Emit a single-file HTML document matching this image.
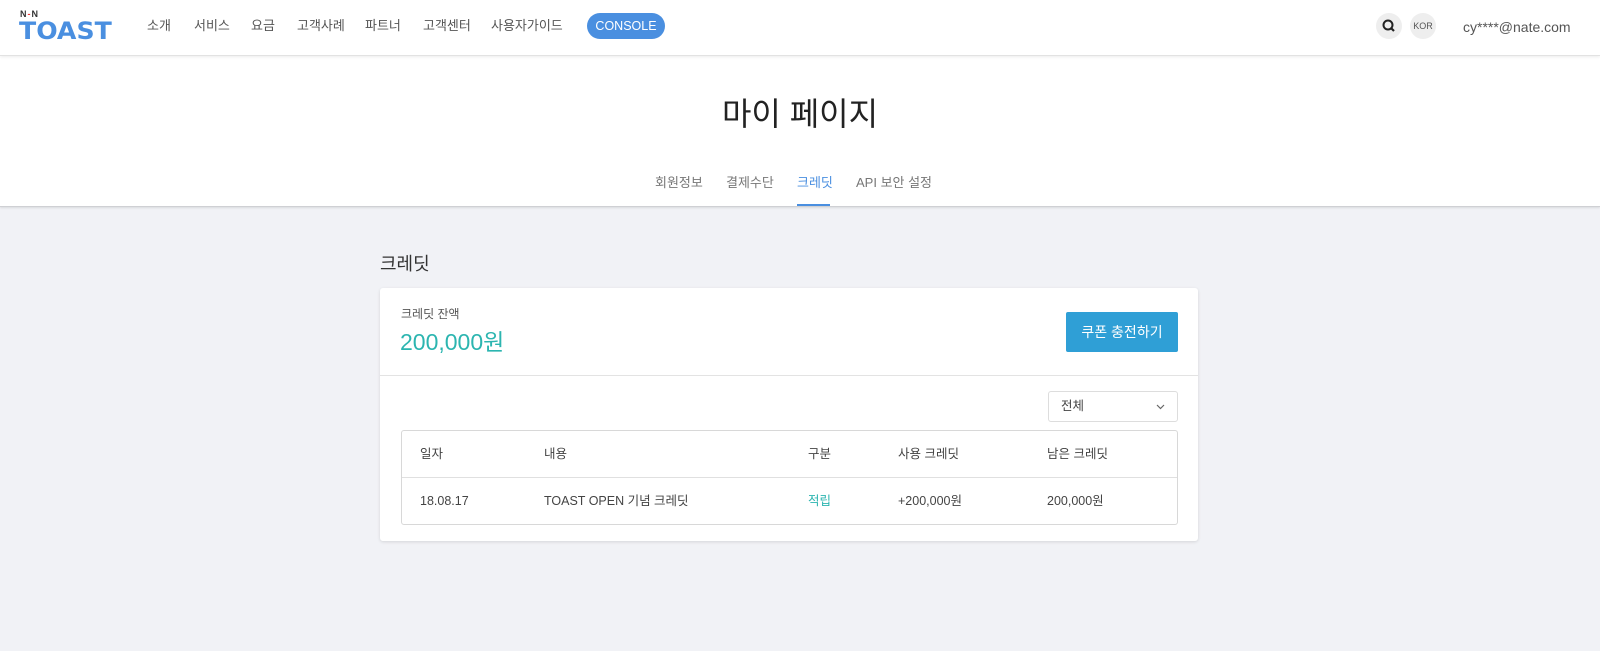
<!DOCTYPE html><html><head><meta charset="utf-8"><style>
*{margin:0;padding:0;box-sizing:border-box}
body{width:1600px;height:651px;background:#f1f2f6;font-family:"Liberation Sans","Noto Sans CJK KR",sans-serif;color:#333;position:relative;overflow:hidden}
.hd{position:absolute;left:0;top:0;width:1600px;height:56px;background:#fff;border-bottom:1px solid #e2e2e2;box-shadow:0 1px 3px rgba(0,0,0,.08);z-index:2}
.nav{position:absolute;top:17px;font-size:13px;color:#555;line-height:18px}
.band{position:absolute;left:0;top:56px;width:1600px;height:151px;background:#fff;border-bottom:1px solid #cfd0d4;box-shadow:0 1px 2px rgba(0,0,0,.1)}
.t{position:absolute;font-size:13px;color:#777;top:174px;line-height:18px}
.card{position:absolute;left:380px;top:288px;width:818px;height:253px;background:#fff;border-radius:3px;box-shadow:0 1px 3px rgba(0,0,0,.12)}
.a{position:absolute;font-size:12.5px;color:#444;line-height:18px}
</style></head><body>
<div class="hd">
 <div style="position:absolute;left:20px;top:9px;font-size:9px;font-weight:bold;letter-spacing:1px;color:#333;line-height:10px">N<span style="color:#e33">-</span>N</div>
 <div style="position:absolute;left:19px;top:20px;font-size:24px;line-height:22px;font-weight:900;color:#4a8fe0;letter-spacing:0px;font-family:'DejaVu Sans',sans-serif;transform:scaleX(1.05);transform-origin:left">TOAST</div>
 <span class="nav" style="left:147px">소개</span><span class="nav" style="left:194px">서비스</span><span class="nav" style="left:251px">요금</span><span class="nav" style="left:297px">고객사례</span><span class="nav" style="left:365px">파트너</span><span class="nav" style="left:423px">고객센터</span><span class="nav" style="left:491px">사용자가이드</span>
 <div style="position:absolute;left:587px;top:13px;width:78px;height:26px;border-radius:13px;background:#4a8fe0;color:#fff;font-size:12.5px;text-align:center;line-height:26px">CONSOLE</div>
 <div style="position:absolute;left:1376px;top:13px;width:26px;height:26px;border-radius:13px;background:#eee"><svg width="26" height="26"><circle cx="12" cy="12" r="4.5" fill="none" stroke="#222" stroke-width="2"/><line x1="15" y1="15" x2="18" y2="18" stroke="#222" stroke-width="2.2"/></svg></div>
 <div style="position:absolute;left:1410px;top:13px;width:26px;height:26px;border-radius:13px;background:#eee;font-size:9px;line-height:26px;text-align:center;color:#555">KOR</div>
 <span style="position:absolute;left:1463px;top:17px;font-size:14px;color:#555;line-height:20px">cy****@nate.com</span>
</div>
<div class="band">
 <div style="position:absolute;left:0;width:1600px;top:36px;text-align:center;font-size:32px;color:#222;line-height:44px">마이 페이지</div>
</div>
<span class="t" style="left:655px">회원정보</span><span class="t" style="left:726px">결제수단</span><span class="t" style="left:797px;color:#4a8fe0">크레딧</span><span class="t" style="left:856px">API 보안 설정</span>
<div style="position:absolute;left:797px;top:204px;width:33px;height:2px;background:#4a8fe0"></div>
<div style="position:absolute;left:380px;top:251px;font-size:18px;color:#333;line-height:26px">크레딧</div>
<div class="card">
 <div style="position:absolute;left:21px;top:17px;font-size:12px;color:#555;line-height:18px">크레딧 잔액</div>
 <div style="position:absolute;left:20px;top:38px;font-size:23px;color:#2cb5b0;line-height:32px">200,000원</div>
 <div style="position:absolute;left:686px;top:24px;width:112px;height:40px;background:#2f9fd6;border-radius:2px;color:#fff;font-size:14px;text-align:center;line-height:40px">쿠폰 충전하기</div>
 <div style="position:absolute;left:0;top:87px;width:818px;height:1px;background:#e3e3e3"></div>
 <div style="position:absolute;left:668px;top:103px;width:130px;height:31px;border:1px solid #ddd;border-radius:3px;font-size:12.5px;color:#444;padding:0 0 0 12px;line-height:29px">전체<svg style="position:absolute;right:12px;top:12px" width="9" height="6"><path d="M1 1L4.5 4.5L8 1" fill="none" stroke="#666" stroke-width="1.2"/></svg></div>
 <div style="position:absolute;left:21px;top:142px;width:777px;height:95px;border:1px solid #d8d8d8;border-radius:3px">
  <div style="position:absolute;left:0;top:46px;width:775px;height:1px;background:#e0e0e0"></div>
  <span class="a" style="left:18px;top:14px">일자</span><span class="a" style="left:142px;top:14px">내용</span><span class="a" style="left:406px;top:14px">구분</span><span class="a" style="left:496px;top:14px">사용 크레딧</span><span class="a" style="left:645px;top:14px">남은 크레딧</span>
  <span class="a" style="left:18px;top:61px">18.08.17</span><span class="a" style="left:142px;top:61px">TOAST OPEN 기념 크레딧</span><span class="a" style="left:406px;top:61px;color:#2cb5b0">적립</span><span class="a" style="left:496px;top:61px">+200,000원</span><span class="a" style="left:645px;top:61px">200,000원</span>
 </div>
</div>
</body></html>
